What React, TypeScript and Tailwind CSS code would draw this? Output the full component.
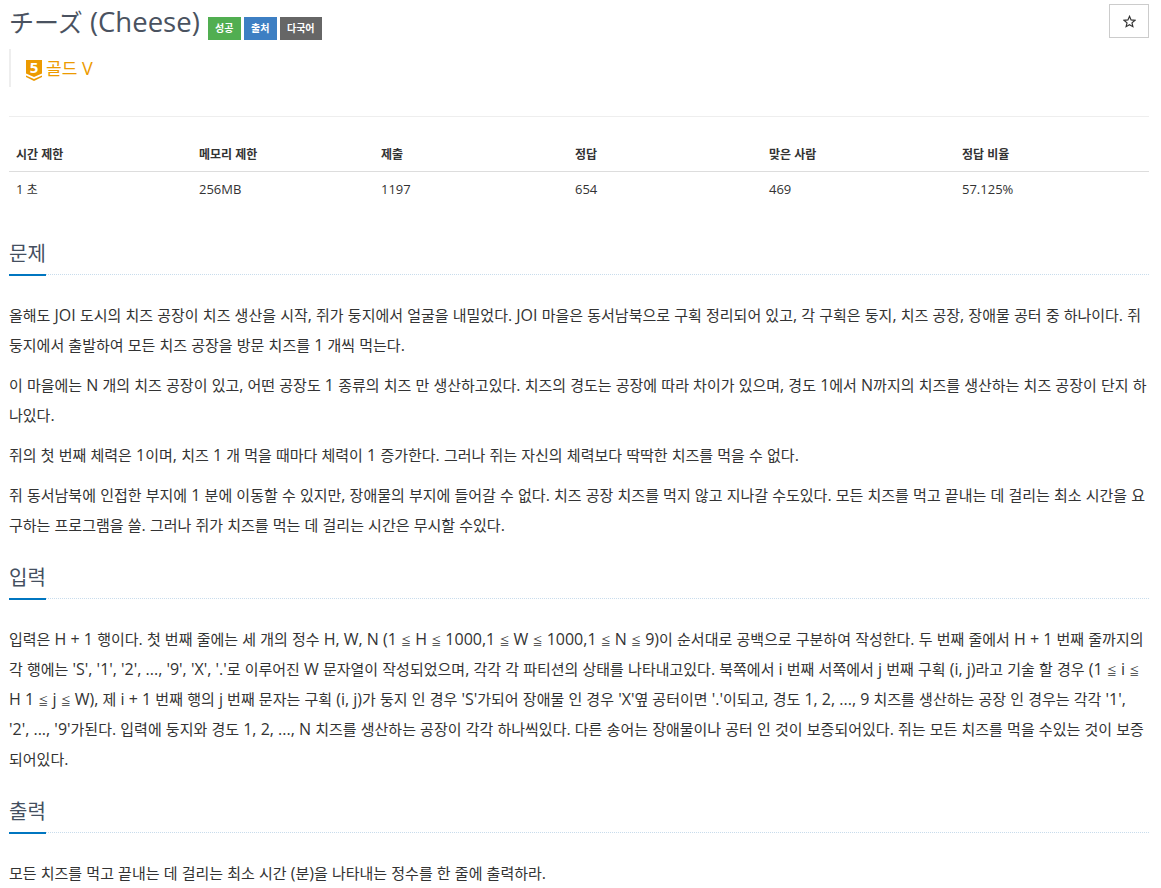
import { Fragment } from "react";

const font = { fontFamily: '"Open Sans", "Noto Sans CJK KR", sans-serif' };

function Mixed({ text, cls }: { text: string; cls: string }) {
  const parts = text.split(/([가-힣]+|≦)/);
  return (
    <>
      {parts.map((p, i) =>
        i % 2 === 0 ? (
          <Fragment key={i}>{p}</Fragment>
        ) : p === "≦" ? (
          <span key={i} className="text-[10px] leading-none">{p}</span>
        ) : (
          <span key={i} className={cls}>{p}</span>
        )
      )}
    </>
  );
}

function Para({ lines, last }: { lines: string[]; last?: boolean }) {
  return (
    <p className={last ? "" : "mb-[10px]"}>
      {lines.map((l, i) => (
        <span key={i} className="block h-[30px] whitespace-nowrap">
          <Mixed text={l} cls="text-[15px] leading-none" />
        </span>
      ))}
    </p>
  );
}

function Heading({ children }: { children: string }) {
  return (
    <div className="border-b border-dotted border-[#c8dcec] h-[38px]">
      <h2 className="inline-block h-[39px] border-b-2 border-[#0076c0] text-[20px] leading-[27px] pt-[3px] text-[#444f5f]">{children}</h2>
    </div>
  );
}

const headers = ["시간 제한", "메모리 제한", "제출", "정답", "맞은 사람", "정답 비율"];
const values = ["1 초", "256MB", "1197", "654", "469", "57.125%"];
const widths = ["w-[183px]", "w-[182px]", "w-[194px]", "w-[194px]", "w-[193px]", "w-[194px]"];

export default function App() {
  return (
    <div className="w-[1161px] h-[888px] overflow-hidden bg-white pl-[9px] pr-[12px] text-[16px] text-[#333]" style={font}>
      <div className="flex items-start justify-between h-[49px]">
        <div className="flex items-center pt-[4px]">
          <h1 className="text-[27.5px] leading-[36px] text-[#4a5260] font-normal">
            <span className="text-[25px]">チーズ</span> (Cheese)
          </h1>
          <div className="flex ml-[8px] gap-[3px] mt-[12px]">
            <span className="bg-[#51ae51] text-white text-[10px] font-semibold h-[23px] w-[33px] flex items-center justify-center">성공</span>
            <span className="bg-[#3d7fc3] text-white text-[10px] font-semibold h-[23px] w-[33px] flex items-center justify-center">출처</span>
            <span className="bg-[#666] text-white text-[10px] font-semibold h-[23px] w-[42px] flex items-center justify-center">다국어</span>
          </div>
        </div>
        <button className="mt-[4px] w-[40px] h-[34px] border border-[#ccc] flex items-center justify-center bg-white">
          <svg width="13" height="13" viewBox="0 0 24 24" fill="none" stroke="#333" strokeWidth="2.2">
            <path d="M12 2.5l2.9 6.6 7.1.7-5.4 4.7 1.6 7L12 17.8l-6.2 3.7 1.6-7L2 9.8l7.1-.7z" />
          </svg>
        </button>
      </div>
      <div className="h-[38px] border-l-2 border-[#eee] pl-[15px] flex items-center gap-[4px] text-[#ec9a00] text-[18px]">
        <svg width="16" height="21" viewBox="0 0 16 21" className="mt-[4px] overflow-visible">
          <path d="M0 0h16v13.5L8 17 0 13.5z" fill="#ec9a00" />
          <path d="M0 15.5L8 19l8-3.5V17l-8 4-8-4z" fill="#ec9a00" />
          <text x="8" y="13" textAnchor="middle" fontSize="15" fontWeight="700" fill="#fff" style={font}>5</text>
        </svg>
        <span><span className="text-[17px]">골드</span> V</span>
      </div>
      <div className="mt-[29px] border-t border-[#eee]" />
      <table className="mt-[19px] w-[1140px] table-fixed border-collapse text-[13px]">
        <thead>
          <tr className="border-b border-[#ddd] h-[35px]">
            {headers.map((h, i) => (
              <th key={h} className={`${widths[i]} text-left px-[7px] pt-[3px] font-bold text-[12px] text-[#333]`}>{h}</th>
            ))}
          </tr>
        </thead>
        <tbody>
          <tr className="h-[36px]">
            {values.map((v) => (
              <td key={v} className="px-[7px] text-[#333]">
                <Mixed text={v} cls="text-[12px]" />
              </td>
            ))}
          </tr>
        </tbody>
      </table>
      <div className="mt-[30px]">
        <Heading>문제</Heading>
        <div className="mt-[25px] leading-[30px] w-[1140px]">
          <Para lines={["올해도 JOI 도시의 치즈 공장이 치즈 생산을 시작, 쥐가 둥지에서 얼굴을 내밀었다. JOI 마을은 동서남북으로 구획 정리되어 있고, 각 구획은 둥지, 치즈 공장, 장애물 공터 중 하나이다. 쥐", "둥지에서 출발하여 모든 치즈 공장을 방문 치즈를 1 개씩 먹는다."]} />
          <Para lines={["이 마을에는 N 개의 치즈 공장이 있고, 어떤 공장도 1 종류의 치즈 만 생산하고있다. 치즈의 경도는 공장에 따라 차이가 있으며, 경도 1에서 N까지의 치즈를 생산하는 치즈 공장이 단지 하", "나있다."]} />
          <Para lines={["쥐의 첫 번째 체력은 1이며, 치즈 1 개 먹을 때마다 체력이 1 증가한다. 그러나 쥐는 자신의 체력보다 딱딱한 치즈를 먹을 수 없다."]} />
          <Para lines={["쥐 동서남북에 인접한 부지에 1 분에 이동할 수 있지만, 장애물의 부지에 들어갈 수 없다. 치즈 공장 치즈를 먹지 않고 지나갈 수도있다. 모든 치즈를 먹고 끝내는 데 걸리는 최소 시간을 요", "구하는 프로그램을 쓸. 그러나 쥐가 치즈를 먹는 데 걸리는 시간은 무시할 수있다."]} />
        </div>
      </div>
      <div className="mt-[21px]">
        <Heading>입력</Heading>
        <div className="mt-[25px] leading-[30px] w-[1140px]">
          <Para lines={[
            "입력은 H + 1 행이다. 첫 번째 줄에는 세 개의 정수 H, W, N (1 ≦ H ≦ 1000,1 ≦ W ≦ 1000,1 ≦ N ≦ 9)이 순서대로 공백으로 구분하여 작성한다. 두 번째 줄에서 H + 1 번째 줄까지의",
            "각 행에는 'S', '1', '2', ..., '9', 'X', '.'로 이루어진 W 문자열이 작성되었으며, 각각 각 파티션의 상태를 나타내고있다. 북쪽에서 i 번째 서쪽에서 j 번째 구획 (i, j)라고 기술 할 경우 (1 ≦ i ≦",
            "H 1 ≦ j ≦ W), 제 i + 1 번째 행의 j 번째 문자는 구획 (i, j)가 둥지 인 경우 'S'가되어 장애물 인 경우 'X'옆 공터이면 '.'이되고, 경도 1, 2, ..., 9 치즈를 생산하는 공장 인 경우는 각각 '1',",
            "'2', ..., '9'가된다. 입력에 둥지와 경도 1, 2, ..., N 치즈를 생산하는 공장이 각각 하나씩있다. 다른 송어는 장애물이나 공터 인 것이 보증되어있다. 쥐는 모든 치즈를 먹을 수있는 것이 보증",
            "되어있다.",
          ]} />
        </div>
      </div>
      <div className="mt-[21px]">
        <Heading>출력</Heading>
        <div className="mt-[25px] leading-[30px] w-[1140px]">
          <Para last lines={["모든 치즈를 먹고 끝내는 데 걸리는 최소 시간 (분)을 나타내는 정수를 한 줄에 출력하라."]} />
        </div>
      </div>
    </div>
  );
}
